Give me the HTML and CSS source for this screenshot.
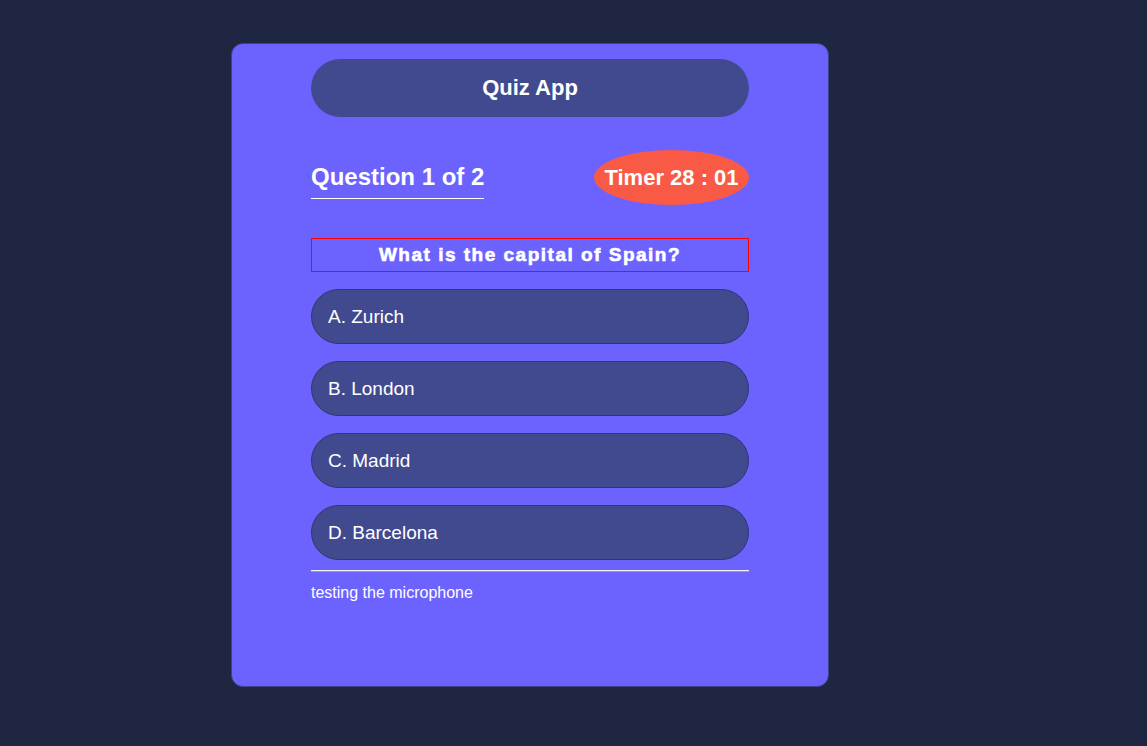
FILE: index.html
```html
<!DOCTYPE html>
<html>
<head>
<meta charset="utf-8">
<link rel="stylesheet" href="styles.css">
</head>
<body>
<div class="card">
  <div class="header">Quiz App</div>
  <div class="meta">
    <div class="count">Question 1 of 2</div>
    <div class="timer">Timer 28 : 01</div>
  </div>
  <div class="question">What is the capital of Spain?</div>
  <div class="options">
    <div class="option">A. Zurich</div>
    <div class="option">B. London</div>
    <div class="option">C. Madrid</div>
    <div class="option">D. Barcelona</div>
  </div>
  <hr class="rule">
  <div class="note">testing the microphone</div>
</div>
</body>
</html>
```

FILE: styles.css
```css
html, body {
  margin: 0;
  padding: 0;
}
body {
  background: #1f2641;
  font-family: "Liberation Sans", Arial, sans-serif;
  color: #fff;
  padding-top: 43px;
  height: 746px;
  box-sizing: border-box;
}
.card {
  margin-left: 231px;
  width: 598px;
  height: 644px;
  box-sizing: border-box;
  background: #6c63ff;
  border: 1px solid #3c4288;
  border-radius: 12px;
  padding: 15px 79px 0 79px;
}
.header {
  height: 58px;
  border-radius: 29px;
  background: #414a8f;
  display: flex;
  align-items: center;
  justify-content: center;
  font-size: 22px;
  font-weight: bold;
}
.meta {
  display: flex;
  justify-content: space-between;
  align-items: flex-start;
  margin-top: 32px;
  height: 56px;
}
.count {
  font-size: 24px;
  line-height: 28px;
  font-weight: bold;
  margin-top: 14px;
  padding-bottom: 7px;
  border-bottom: 1px solid #fff;
}
.timer {
  width: 155px;
  height: 55px;
  margin-top: 1px;
  border-radius: 50%;
  background: #f95a45;
  display: flex;
  align-items: center;
  justify-content: center;
  font-size: 22px;
  font-weight: bold;
}
.question {
  margin-top: 33px;
  height: 34px;
  box-sizing: border-box;
  border: 1px solid #ff0000;
  display: flex;
  align-items: center;
  justify-content: center;
  font-size: 19px;
  font-weight: 900;
  letter-spacing: 1.5px;
  -webkit-text-stroke: 0.6px #fff;
}
.options {
  margin-top: 17px;
  display: flex;
  flex-direction: column;
  gap: 17px;
}
.option {
  height: 55px;
  box-sizing: border-box;
  border: 1px solid #2f3575;
  border-radius: 28px;
  background: #414a8f;
  display: flex;
  align-items: center;
  padding-left: 16px;
  font-size: 19px;
}
.rule {
  margin: 10px 0 0 0;
  height: 0;
  border: none;
  border-top: 1px solid #f2f2f2;
  border-bottom: 1px solid #9a9aa8;
}
.note {
  margin-top: 12px;
  font-size: 16px;
}
```
